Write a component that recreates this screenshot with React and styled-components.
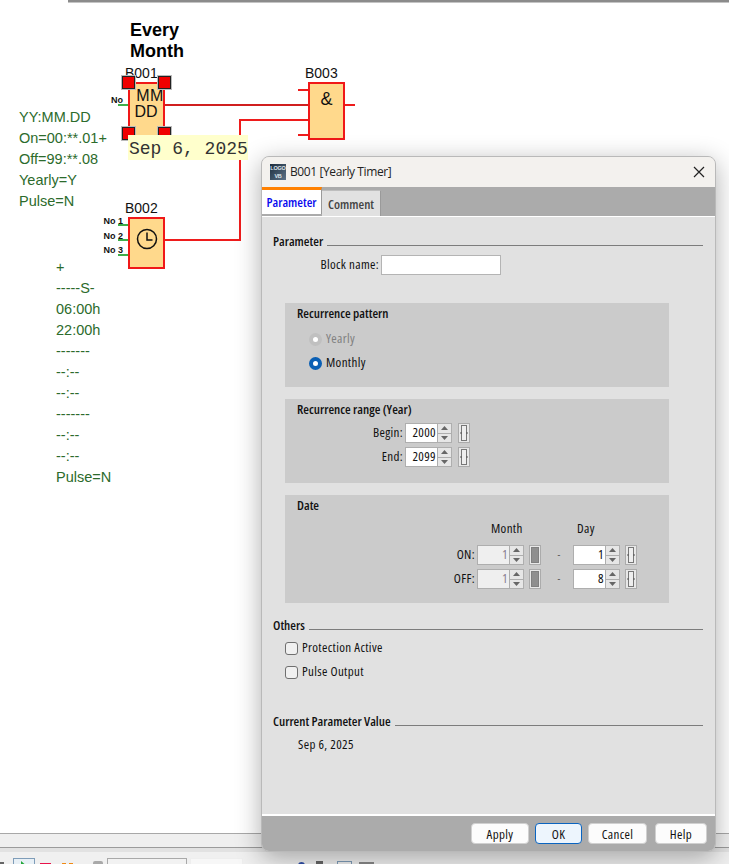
import React from "react";
import styled, { createGlobalStyle } from "styled-components";

const Global = createGlobalStyle`
  html, body { margin: 0; padding: 0; background: #fff; }
  #root { width: 729px; height: 864px; overflow: hidden; }
  * { box-sizing: border-box; }
`;

const UI = `"Open Sans", "Noto Sans", sans-serif`;

const Page = styled.div`
  position: relative; width: 729px; height: 864px; overflow: hidden;
  display: flex; flex-direction: column; background: #fff;
`;
const TopRule = styled.div`height: 3px; margin-left: 68px; background: #8b8b8b; border-bottom: 1px solid #c4c4c4; flex: none;`;
const Canvas = styled.div`position: relative; flex: 1; background: #fff;`;
const ScrollBand = styled.div`height: 15px; flex: none; background: #efefef; border-top: 1px solid #a8a8a8; border-bottom: 1px solid #9b9b9b;`;
const SplitBand = styled.div`height: 4px; flex: none; background: #e2e2e2;`;
const Toolbar = styled.div`height: 12px; flex: none; background: #f0f0f0; display: flex; align-items: flex-start; padding-top: 6px; overflow: hidden;`;
const ToolItem = styled.div`
  flex: none; width: ${p => p.$w}px; height: ${p => p.$h || 20}px;
  margin-left: ${p => p.$ml || 0}px; margin-top: ${p => p.$mt || 0}px;
  background: ${p => p.$bg || "transparent"};
  border: ${p => p.$line ? `1px solid ${p.$line}` : "none"};
  border-radius: ${p => p.$r || 0}px;
`;
const PlayButton = styled.div`
  flex: none; width: 22px; height: 20px; margin-left: 9px; background: #e8f0f6; border: 1px solid #7f9db9;
  display: flex; justify-content: center; padding-top: 2px;
`;

const Wires = styled.svg`position: absolute; left: 0; top: 0; width: 729px; height: 830px;`;
const Note = styled.div`
  position: absolute; left: ${p => p.$x}px; top: ${p => p.$y}px; white-space: pre;
  font: 14.5px/21px "Liberation Sans", Arial, sans-serif; color: #2c6b2c;
`;
const Heading = styled.div`
  position: absolute; left: 130px; top: 17px;
  font: bold 18px/21px "Liberation Sans", Arial, sans-serif; color: #000;
`;
const BlockName = styled.div`
  position: absolute; left: ${p => p.$x}px; top: ${p => p.$y}px;
  font: 14px/16px "Liberation Sans", Arial, sans-serif; color: #111;
`;
const Block = styled.div`
  position: absolute; left: ${p => p.$x}px; top: ${p => p.$y}px; width: ${p => p.$w}px; height: ${p => p.$h}px;
  background: #ffd98c; border: 2px solid #f01818;
  display: flex; flex-direction: column; align-items: center; color: #111;
  font-family: "Liberation Sans", Arial, sans-serif;
`;
const BlockText = styled.div`font-size: ${p => p.$fs || 16}px; line-height: 16px; margin-top: ${p => p.$mt || 0}px; margin-left: ${p => p.$ml || 0}px; letter-spacing: ${p => p.$ls || 0}px;`;
const Handle = styled.div`
  position: absolute; left: ${p => p.$x}px; top: ${p => p.$y}px; width: 13px; height: 13px;
  background: #f00000; border: 1px solid #222; box-shadow: 0 0 0 1px #bbb;
`;
const PinLabel = styled.div`
  position: absolute; right: ${p => 729 - p.$right}px; top: ${p => p.$y}px; white-space: nowrap;
  font: bold 9px/11px "Liberation Sans", Arial, sans-serif; color: #111;
`;
const DateTip = styled.div`
  position: absolute; left: 128px; top: 132px; width: 120px; height: 25px; background: #ffffcc;
  font: 18px/28px "Liberation Mono", monospace; color: #333; white-space: pre; padding-left: 1px; overflow: hidden;
`;

const Dialog = styled.div`
  position: absolute; left: 261px; top: 156px; width: 455px; height: 696px;
  display: flex; flex-direction: column; overflow: hidden;
  border: 1px solid #b9b9b9; border-radius: 8px; background: #e1e1e1;
  box-shadow: 0 6px 26px rgba(0,0,0,.32);
  font: 13px/16px ${UI}; font-stretch: 75%; letter-spacing: 0.35px; color: #111;
`;
const TitleBar = styled.div`
  height: 30px; flex: none; background: #f3f1ee; display: flex; align-items: center; padding: 0 8px;
  gap: 4px; font-size: 12px; color: #222;
`;
const Title = styled.div`flex: 1; letter-spacing: -0.4px; font-stretch: 100%;`;
const Logo = styled.div`
  width: 16px; height: 16px; flex: none; background: linear-gradient(135deg, #1c2c3c, #5c7288);
  color: #dfe6ec; font: bold 5.5px/8px "Liberation Sans", sans-serif; letter-spacing: -0.2px; text-align: center;
`;
const Close = styled.button`
  width: 14px; height: 14px; border: 0; padding: 0; margin-right: 1px; background: none; display: flex;
`;
const TabStrip = styled.div`height: 29px; flex: none; background: #ababab; display: flex; align-items: flex-end;`;
const Tab = styled.div`
  height: ${p => p.$active ? 27 : 26}px; width: ${p => p.$active ? 60 : 59}px; margin-left: 0;
  display: flex; align-items: center; justify-content: center; font-weight: 600; letter-spacing: 0; margin-bottom: ${p => p.$active ? 2 : 0}px;
  padding-top: ${p => p.$active ? 0 : 1}px;
  background: ${p => p.$active ? "#fff" : "#e1e1e1"};
  color: ${p => p.$active ? "#0a0aee" : "#444"};
  border-top: ${p => p.$active ? "3px solid #ff8000" : "1px solid #bdbdbd"};
  border-right: 1px solid #9a9a9a;
  align-self: flex-end;
`;
const Body = styled.div`
  flex: 1; background: #e1e1e1; border-top: 1px solid #fff; border-bottom: 2px solid #fff; padding: 17px 12px 0 11px;
`;
const SectionHead = styled.div`
  display: flex; align-items: center; gap: 4px; height: 16px; padding-bottom: 2px; font-weight: 600; letter-spacing: 0; margin-top: ${p => p.$mt || 0}px; width: 430px;
  &::after { content: ""; flex: 1; height: 1px; background: #7c7c7c; margin-top: 8px; }
`;
const NameRow = styled.div`display: flex; align-items: center; gap: 2px; margin-top: 5px;`;
const RightLabel = styled.div`width: ${p => p.$w}px; text-align: right; flex: none; margin-top: -2px;`;
const TextInput = styled.div`width: 120px; height: 20px; background: #fff; border: 1px solid #b4b4b4;`;
const Panel = styled.div`
  margin: ${p => p.$mt}px 0 0 12px; width: 384px; height: ${p => p.$h}px; background: #cbcbcb; padding: 3px 12px 0;
`;
const PanelTitle = styled.div`font-weight: 600; letter-spacing: 0; height: 16px; line-height: 14px;`;
const RadioRow = styled.div`
  display: flex; align-items: center; gap: 4px; height: 16px; padding-left: 12px; margin-top: ${p => p.$mt}px;
  color: ${p => p.$off ? "#808080" : "#111"};
`;
const RowText = styled.span`margin-top: -2px;`;
const Radio = styled.span`
  width: 13px; height: 13px; border-radius: 50%; flex: none; display: block; 
  background: #fff; border: ${p => p.$on ? "4px solid #0a5fb4" : "4px solid #c0c0c0"};
`;
const FieldRow = styled.div`display: flex; align-items: center; gap: 2px; margin-top: ${p => p.$mt}px;`;
const Spin = styled.div`
  width: 47px; height: 20px; display: flex; flex: none; border: 1px solid #aeaeae;
  background: ${p => p.$off ? "#efefef" : "#fff"}; color: ${p => p.$off ? "#8a7f90" : "#111"};
`;
const SpinValue = styled.div`flex: 1; text-align: right; padding-right: 1px; line-height: 16px;`;
const SpinArrows = styled.div`width: 14px; flex: none; display: flex; flex-direction: column; gap: 1px; background: #aeaeae; border-left: 1px solid #aeaeae;`;
const SpinArrow = styled.div`flex: 1; background: #e6e6e6; display: flex; align-items: center; justify-content: center;`;
const BracketBox = styled.div`
  width: 12px; height: 20px; flex: none; margin-left: ${p => p.$ml || 5}px; background: #e8e8e8; border: 1px solid #ababab;
  display: flex; align-items: center; justify-content: center;
`;
const DateGrid = styled.div`display: grid; grid-template-columns: 180px 64px 32px 64px; grid-auto-rows: 20px; row-gap: 4px; margin-top: 7px;`;
const ColHead = styled.div`padding-left: ${p => p.$pad}px; margin-bottom: 2px; line-height: 14px;`;
const DateLabel = styled.div`text-align: right; padding-right: 2px; line-height: 18px;`;
const Cell = styled.div`display: flex;`;
const Dash = styled.div`text-align: center; line-height: 18px; padding-left: 4px; color: #555; font-size: 10px;`;
const CheckRow = styled.div`display: flex; align-items: center; gap: 4px; height: 14px; padding-left: 12px; margin-top: ${p => p.$mt}px;`;
const Check = styled.span`width: 13px; height: 13px; flex: none; border: 1px solid #6f6f6f; border-radius: 3px; background: #f0f0f0;`;
const ValueText = styled.div`padding-left: 25px; margin-top: 7px; line-height: 14px;`;
const Footer = styled.div`height: 35px; flex: none; background: #ababab; display: flex; align-items: flex-start; padding: 7px 8px 0 0; justify-content: flex-end;`;
const Btn = styled.button`
  width: ${p => p.$w}px; height: 21px; margin-left: ${p => p.$ml}px; padding: 0;
  background: ${p => p.$primary ? "#edf5fd" : "#fcfcfc"};
  border: 1px solid ${p => p.$primary ? "#0a64c0" : "#d0d0d0"}; border-radius: 4px;
  font: 13px/18px ${UI}; font-stretch: 75%; letter-spacing: 0.35px; color: #111;
`;

const Up = () => <svg width="7" height="4" viewBox="0 0 7 4"><path d="M0 4L3.5 0L7 4Z" fill="#666" /></svg>;
const Down = () => <svg width="7" height="4" viewBox="0 0 7 4"><path d="M0 0L3.5 4L7 0Z" fill="#666" /></svg>;

const SpinBox = ({ value, off }) => (
  <Spin $off={off}>
    <SpinValue>{value}</SpinValue>
    <SpinArrows>
      <SpinArrow><Up /></SpinArrow>
      <SpinArrow><Down /></SpinArrow>
    </SpinArrows>
  </Spin>
);
const Bracket = ({ off, ml }) => (
  <BracketBox $ml={ml}>
    {off ? (
      <svg width="8" height="16" viewBox="0 0 8 16">
        <rect x="0.5" y="0.5" width="7" height="15" fill="#8f8f8f" stroke="#808080" />
      </svg>
    ) : (
      <svg width="8" height="16" viewBox="0 0 8 16">
        <rect x="1.5" y="0.5" width="5" height="15" fill="#eee" stroke="#777" />
        <path d="M0 8H2M6 8H8" stroke="#555" />
      </svg>
    )}
  </BracketBox>
);

const pins = [[213, "No 1"], [228, "No 2"], [242, "No 3"]];

export default function App() {
  return (
    <Page>
      <Global />
      <TopRule />
      <Canvas>
        <Wires viewBox="0 3 729 830">
          <g stroke="#ee1c1c" strokeWidth="2" fill="none">
            <path d="M165 105H308" />
            <path d="M165 240H240V120H308" />
            <path d="M298 90H308M298 135H308M345 105H355" />
          </g>
          <path d="M165 105H308" stroke="#8a2a2a" strokeWidth="0.6" />
          <path d="M118 105H128M118 225H128M118 240H128M118 255H128" stroke="#3fae4a" strokeWidth="2" />
        </Wires>
        <Heading>Every<br />Month</Heading>
        <Note $x={19} $y={104}>{"YY:MM.DD\nOn=00:**.01+\nOff=99:**.08\nYearly=Y\nPulse=N"}</Note>
        <Note $x={56} $y={254}>{"+\n-----S-\n06:00h\n22:00h\n-------\n--:--\n--:--\n-------\n--:--\n--:--\nPulse=N"}</Note>

        <BlockName $x={125} $y={62}>B001</BlockName>
        <Block $x={128} $y={79} $w={37} $h={56}>
          <BlockText $mt={4} $ml={7} $ls={0.5}>MM</BlockText>
          <BlockText $ml={-1}>DD</BlockText>
        </Block>
        <Handle $x={122} $y={73} />
        <Handle $x={158} $y={73} />
        <Handle $x={122} $y={124} />
        <Handle $x={158} $y={124} />
        <PinLabel $right={123} $y={92}>No</PinLabel>

        <BlockName $x={125} $y={197}>B002</BlockName>
        <Block $x={128} $y={214} $w={37} $h={52} />
        <svg style={{ position: "absolute", left: 136, top: 225 }} width="22" height="22" viewBox="0 0 22 22">
          <circle cx="11" cy="11" r="9.5" fill="none" stroke="#111" strokeWidth="1.5" />
          <path d="M11 4.5V12H16.5" fill="none" stroke="#111" strokeWidth="1.5" />
        </svg>
        {pins.map(([y, t]) => <PinLabel key={t} $right={123} $y={y}>{t}</PinLabel>)}

        <BlockName $x={305} $y={62}>B003</BlockName>
        <Block $x={308} $y={79} $w={37} $h={58}>
          <BlockText $mt={7} $fs={18}>&amp;</BlockText>
        </Block>

        <DateTip>Sep 6, 2025</DateTip>
      </Canvas>
      <ScrollBand />
      <SplitBand />
      <Toolbar>
        <ToolItem $w={4} $mt={4} $bg="#666" />
        <PlayButton>
          <svg width="9" height="12" viewBox="0 0 9 12"><path d="M1 0L8 6L1 12Z" fill="#22a83a" /></svg>
        </PlayButton>
        <ToolItem $w={11} $ml={5} $mt={5} $bg="#e8124a" />
        <ToolItem $w={11} $ml={11} $mt={5} $bg="linear-gradient(90deg,#f08a14 0 4px,transparent 4px 7px,#f08a14 7px)" />
        <ToolItem $w={10} $ml={20} $mt={3} $bg="#a9a9a9" $r={2} />
        <ToolItem $w={80} $ml={4} $bg="#f2f2f2" $line="#a9a9a9" />
        <ToolItem $w={53} $ml={3} $bg="#f7f7f7" $line="#eeeeee" />
        <ToolItem $w={7} $ml={55} $mt={4} $bg="#2f4fa8" $r={4} />
        <ToolItem $w={7} $ml={11} $mt={3} $bg="#666" />
        <ToolItem $w={15} $ml={14} $mt={3} $line="#7f9db9" />
        <ToolItem $w={15} $ml={7} $mt={4} $bg="#888" />
      </Toolbar>

      <Dialog>
        <TitleBar>
          <Logo>LOGO<br />VB</Logo>
          <Title>B001 [Yearly Timer]</Title>
          <Close aria-label="Close">
            <svg width="14" height="14" viewBox="0 0 14 14"><path d="M2 2L12 12M12 2L2 12" stroke="#222" strokeWidth="1.2" /></svg>
          </Close>
        </TitleBar>
        <TabStrip>
          <Tab $active>Parameter</Tab>
          <Tab>Comment</Tab>
        </TabStrip>
        <Body>
          <SectionHead>Parameter</SectionHead>
          <NameRow>
            <RightLabel $w={106}>Block name:</RightLabel>
            <TextInput />
          </NameRow>

          <Panel $mt={28} $h={84}>
            <PanelTitle>Recurrence pattern</PanelTitle>
            <RadioRow $off $mt={9}><Radio /><RowText>Yearly</RowText></RadioRow>
            <RadioRow $mt={8}><Radio $on /><RowText>Monthly</RowText></RadioRow>
          </Panel>

          <Panel $mt={12} $h={84}>
            <PanelTitle>Recurrence range (Year)</PanelTitle>
            <FieldRow $mt={5}>
              <RightLabel $w={106}>Begin:</RightLabel>
              <SpinBox value="2000" />
              <Bracket ml={4} />
            </FieldRow>
            <FieldRow $mt={4}>
              <RightLabel $w={106}>End:</RightLabel>
              <SpinBox value="2099" />
              <Bracket ml={4} />
            </FieldRow>
          </Panel>

          <Panel $mt={12} $h={108}>
            <PanelTitle>Date</PanelTitle>
            <DateGrid>
              <div />
              <ColHead $pad={14}>Month</ColHead>
              <div />
              <ColHead $pad={4}>Day</ColHead>

              <DateLabel>ON:</DateLabel>
              <Cell><SpinBox value="1" off /><Bracket off /></Cell>
              <Dash>-</Dash>
              <Cell><SpinBox value="1" /><Bracket /></Cell>

              <DateLabel>OFF:</DateLabel>
              <Cell><SpinBox value="1" off /><Bracket off /></Cell>
              <Dash>-</Dash>
              <Cell><SpinBox value="8" /><Bracket /></Cell>
            </DateGrid>
          </Panel>

          <SectionHead $mt={15}>Others</SectionHead>
          <CheckRow $mt={7}><Check /><RowText>Protection Active</RowText></CheckRow>
          <CheckRow $mt={10}><Check /><RowText>Pulse Output</RowText></CheckRow>

          <SectionHead $mt={35}>Current Parameter Value</SectionHead>
          <ValueText>Sep 6, 2025</ValueText>
        </Body>
        <Footer>
          <Btn $w={58}>Apply</Btn>
          <Btn $w={47} $ml={6} $primary>OK</Btn>
          <Btn $w={59} $ml={6}>Cancel</Btn>
          <Btn $w={52} $ml={8}>Help</Btn>
        </Footer>
      </Dialog>
    </Page>
  );
}
